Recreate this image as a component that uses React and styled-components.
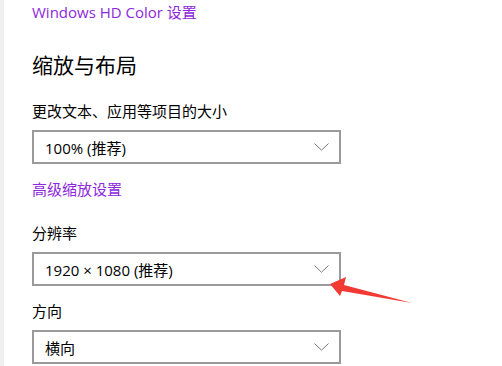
import styled, { createGlobalStyle } from "styled-components";

const GlobalStyle = createGlobalStyle`
  html, body {
    margin: 0;
    padding: 0;
    background: #ffffff;
    overflow: hidden;
  }
  body {
    font-family: "Open Sans", "Noto Sans CJK SC", sans-serif;
    color: #000;
  }
`;

const Page = styled.div`
  position: relative;
  width: 502px;
  height: 366px;
  display: flex;
`;

const SideStrip = styled.div`
  width: 4px;
  background: #f0f0f0;
  flex-shrink: 0;
`;

const Content = styled.div`
  padding: 2px 0 0 28px;
  display: flex;
  flex-direction: column;
`;

const Link = styled.a`
  font-size: 15px;
  line-height: 20px;
  color: #8e28dc;
  text-decoration: none;
  margin-top: ${(p) => p.$top || 0}px;
`;

const Heading = styled.h2`
  margin: 28px 0 0;
  font-size: 21px;
  font-weight: 400;
  line-height: 28px;
  font-family: "Noto Sans CJK SC", sans-serif;
`;

const Label = styled.div`
  font-size: 15px;
  line-height: 20px;
  margin-top: ${(p) => p.$top}px;
  font-family: "Noto Sans CJK SC", sans-serif;
`;

const Select = styled.div`
  margin-top: 9px;
  width: 309px;
  height: 34px;
  box-sizing: border-box;
  border: 2px solid #9a9a9a;
  display: flex;
  align-items: center;
  justify-content: space-between;
  padding: 0 10px 0 11px;
  font-size: 15px;
`;

const Chevron = () => (
  <svg width="15" height="8" viewBox="0 0 15 8">
    <path d="M0.5 0.5 L7.5 7.2 L14.5 0.5" fill="none" stroke="#7a7a7a" strokeWidth="1" />
  </svg>
);

const Arrow = styled.svg`
  position: absolute;
  left: 0;
  top: 0;
  pointer-events: none;
`;

export default function App() {
  return (
    <>
      <GlobalStyle />
      <Page>
        <SideStrip />
        <Content>
          <Link>Windows HD Color 设置</Link>
          <Heading>缩放与布局</Heading>
          <Label $top={23}>更改文本、应用等项目的大小</Label>
          <Select>
            <span>100% (推荐)</span>
            <Chevron />
          </Select>
          <Link $top={15}>高级缩放设置</Link>
          <Label $top={24}>分辨率</Label>
          <Select>
            <span>1920 × 1080 (推荐)</span>
            <Chevron />
          </Select>
          <Label $top={15}>方向</Label>
          <Select>
            <span>横向</span>
            <Chevron />
          </Select>
        </Content>
        <Arrow width="502" height="366">
          <polygon
            points="330,284 346,277 344,285 412,303 342,291 340,296"
            fill="#f23a35"
          />
        </Arrow>
      </Page>
    </>
  );
}
